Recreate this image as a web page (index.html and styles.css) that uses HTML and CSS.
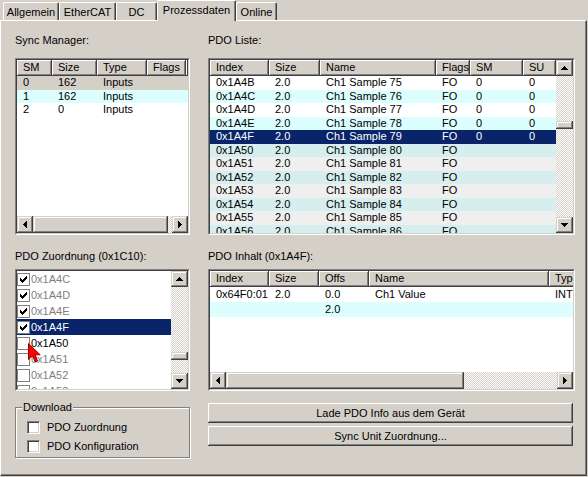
FILE: index.html
```html
<!DOCTYPE html>
<html lang="de">
<head>
<meta charset="utf-8">
<title>Prozessdaten</title>
<link rel="stylesheet" href="styles.css">
</head>
<body>
<div class="tabs">
  <div class="tab tab-allgemein">Allgemein</div>
  <div class="tab tab-ethercat">EtherCAT</div>
  <div class="tab tab-dc">DC</div>
  <div class="tab tab-proz active">Prozessdaten</div>
  <div class="tab tab-online">Online</div>
</div>
<div class="panel">
  <div class="col col-left">
    <div class="label">Sync Manager:</div>
    <div class="sunken box-top">
      <div class="in lv-h">
        <div class="lv lv-sm">
          <div class="hdr"><div>SM</div><div>Size</div><div>Type</div><div>Flags</div><div class="fill"></div></div>
          <div class="r gray"><span>0</span><span>162</span><span>Inputs</span><span></span></div>
          <div class="r cyan"><span>1</span><span>162</span><span>Inputs</span><span></span></div>
          <div class="r"><span>2</span><span>0</span><span>Inputs</span><span></span></div>
        </div>
        <div class="hbar">
          <div class="sbtn hb"><svg width="4" height="7" viewBox="0 0 4 7"><path d="M3 0h1v7H3V6H2V5H1V4H0V3h1V2h1V1h1z"/></svg></div>
          <div class="htrack"><div class="thumb thumb-sm"></div></div>
          <div class="sbtn hb"><svg width="4" height="7" viewBox="0 0 4 7"><path d="M0 0h1v1h1v1h1v1h1v1H3v1H2v1H1v1H0z"/></svg></div>
        </div>
      </div>
    </div>

    <div class="label label2">PDO Zuordnung (0x1C10):</div>
    <div class="sunken box-bottom">
      <div class="in lv-v">
        <div class="lb">
          <div class="item dim"><span class="cb"><svg width="7" height="7" viewBox="0 0 7 7"><path d="M6 0h1v3H6v1H5v1H4v1H3v1H2V6H1V5H0V2h1v1h1v1h1V3h1V2h1V1h1z"/></svg></span>0x1A4C</div>
          <div class="item dim"><span class="cb"><svg width="7" height="7" viewBox="0 0 7 7"><path d="M6 0h1v3H6v1H5v1H4v1H3v1H2V6H1V5H0V2h1v1h1v1h1V3h1V2h1V1h1z"/></svg></span>0x1A4D</div>
          <div class="item dim"><span class="cb"><svg width="7" height="7" viewBox="0 0 7 7"><path d="M6 0h1v3H6v1H5v1H4v1H3v1H2V6H1V5H0V2h1v1h1v1h1V3h1V2h1V1h1z"/></svg></span>0x1A4E</div>
          <div class="item sel"><span class="cb"><svg width="7" height="7" viewBox="0 0 7 7"><path d="M6 0h1v3H6v1H5v1H4v1H3v1H2V6H1V5H0V2h1v1h1v1h1V3h1V2h1V1h1z"/></svg></span>0x1A4F</div>
          <div class="item"><span class="cb"></span>0x1A50</div>
          <div class="item dim"><span class="cb"></span>0x1A51</div>
          <div class="item dim"><span class="cb"></span>0x1A52</div>
          <div class="item dim"><span class="cb"></span>0x1A53</div>
        </div>
        <div class="vbar">
          <div class="sbtn vb"><svg width="7" height="4" viewBox="0 0 7 4"><path d="M3 0h1v1h1v1h1v1h1v1H0V3h1V2h1V1h1z"/></svg></div>
          <div class="vtrack"><div class="thumb thumb-lb"></div></div>
          <div class="sbtn vb"><svg width="7" height="4" viewBox="0 0 7 4"><path d="M0 0h7v1H6v1H5v1H4v1H3V3H2V2H1V1H0z"/></svg></div>
        </div>
      </div>
    </div>

    <fieldset class="group">
      <legend>Download</legend>
      <div class="chk"><span class="cb3d"></span>PDO Zuordnung</div>
      <div class="chk"><span class="cb3d"></span>PDO Konfiguration</div>
    </fieldset>
  </div>

  <div class="col col-right">
    <div class="label">PDO Liste:</div>
    <div class="sunken box-top">
      <div class="in lv-v">
        <div class="lv lv-pdo">
          <div class="hdr"><div>Index</div><div>Size</div><div>Name</div><div>Flags</div><div>SM</div><div>SU</div></div>
          <div class="r"><span>0x1A4B</span><span>2.0</span><span>Ch1 Sample 75</span><span>FO</span><span>0</span><span>0</span></div>
          <div class="r cyan"><span>0x1A4C</span><span>2.0</span><span>Ch1 Sample 76</span><span>FO</span><span>0</span><span>0</span></div>
          <div class="r"><span>0x1A4D</span><span>2.0</span><span>Ch1 Sample 77</span><span>FO</span><span>0</span><span>0</span></div>
          <div class="r cyan"><span>0x1A4E</span><span>2.0</span><span>Ch1 Sample 78</span><span>FO</span><span>0</span><span>0</span></div>
          <div class="r sel"><span>0x1A4F</span><span>2.0</span><span>Ch1 Sample 79</span><span>FO</span><span>0</span><span>0</span></div>
          <div class="r dcyan"><span>0x1A50</span><span>2.0</span><span>Ch1 Sample 80</span><span>FO</span><span></span><span></span></div>
          <div class="r dgray"><span>0x1A51</span><span>2.0</span><span>Ch1 Sample 81</span><span>FO</span><span></span><span></span></div>
          <div class="r dcyan"><span>0x1A52</span><span>2.0</span><span>Ch1 Sample 82</span><span>FO</span><span></span><span></span></div>
          <div class="r dgray"><span>0x1A53</span><span>2.0</span><span>Ch1 Sample 83</span><span>FO</span><span></span><span></span></div>
          <div class="r dcyan"><span>0x1A54</span><span>2.0</span><span>Ch1 Sample 84</span><span>FO</span><span></span><span></span></div>
          <div class="r dgray"><span>0x1A55</span><span>2.0</span><span>Ch1 Sample 85</span><span>FO</span><span></span><span></span></div>
          <div class="r dcyan"><span>0x1A56</span><span>2.0</span><span>Ch1 Sample 86</span><span>FO</span><span></span><span></span></div>
        </div>
        <div class="vbar">
          <div class="sbtn vb"><svg width="7" height="4" viewBox="0 0 7 4"><path d="M3 0h1v1h1v1h1v1h1v1H0V3h1V2h1V1h1z"/></svg></div>
          <div class="vtrack"><div class="thumb thumb-pdo"></div></div>
          <div class="sbtn vb"><svg width="7" height="4" viewBox="0 0 7 4"><path d="M0 0h7v1H6v1H5v1H4v1H3V3H2V2H1V1H0z"/></svg></div>
        </div>
      </div>
    </div>

    <div class="label label2">PDO Inhalt (0x1A4F):</div>
    <div class="sunken box-bottom">
      <div class="in lv-h">
        <div class="lv lv-inh">
          <div class="hdr"><div>Index</div><div>Size</div><div>Offs</div><div>Name</div><div>Type</div></div>
          <div class="r"><span>0x64F0:01</span><span>2.0</span><span>0.0</span><span>Ch1 Value</span><span>INT</span></div>
          <div class="r cyan"><span></span><span></span><span>2.0</span><span></span><span></span></div>
        </div>
        <div class="hbar">
          <div class="sbtn hb"><svg width="4" height="7" viewBox="0 0 4 7"><path d="M3 0h1v7H3V6H2V5H1V4H0V3h1V2h1V1h1z"/></svg></div>
          <div class="htrack"><div class="thumb thumb-inh"></div></div>
          <div class="sbtn hb"><svg width="4" height="7" viewBox="0 0 4 7"><path d="M0 0h1v1h1v1h1v1h1v1H3v1H2v1H1v1H0z"/></svg></div>
        </div>
      </div>
    </div>

    <button class="btn btn-first" type="button">Lade PDO Info aus dem Gerät</button>
    <button class="btn" type="button">Sync Unit Zuordnung...</button>
  </div>

  <svg class="cursor" width="13" height="21" viewBox="0 0 13 21"><path d="M0.5 0.5V16.5L4.5 12.7L7.2 19L9.6 18L7 11.8H12.2Z" fill="#ff0000" stroke="#9a0000" stroke-width="1" stroke-linejoin="miter"/></svg>
</div>
</body>
</html>
```

FILE: styles.css
```css
* { box-sizing: border-box; }
html, body { margin: 0; padding: 0; }
body {
  width: 588px;
  height: 477px;
  overflow: hidden;
  background: #d4d0c8;
  color: #000;
  font-family: "Liberation Sans", Arial, sans-serif;
  font-size: 11px;
  line-height: 13px;
}

/* ---------- tabs ---------- */
.tabs {
  display: flex;
  align-items: flex-end;
  height: 20px;
  padding-left: 3px;
}
.tab {
  flex: none;
  height: 18px;
  padding-top: 3px;
  line-height: 13px;
  text-align: center;
  white-space: nowrap;
  border-top: 1px solid #fff;
  border-left: 1px solid #fff;
  border-right: 1px solid #404040;
  border-radius: 2px 2px 0 0;
  box-shadow: inset -1px 0 #808080;
}
.tab-allgemein { width: 56px; }
.tab-ethercat { width: 57px; }
.tab-dc { width: 41px; }
.tab-proz { width: 79px; }
.tab-online { width: 41px; }
.tab.active {
  height: 21px;
  margin-bottom: -1px;
  position: relative;
  z-index: 1;
  background: #d4d0c8;
  padding-top: 3px;
}

/* ---------- panel ---------- */
.panel {
  position: relative;
  width: 587px;
  height: 456px;
  border: 1px solid #fff;
  border-right-color: #404040;
  border-bottom-color: #404040;
  box-shadow: inset -1px -1px #808080;
  display: flex;
  gap: 18px;
  padding: 13px 0 0 14px;
}
.col { display: flex; flex-direction: column; flex: none; }
.col-left { width: 175px; }
.col-right { width: 367px; }

.label { height: 13px; line-height: 13px; white-space: nowrap; }
.label2 { margin-top: 15px; }

/* ---------- sunken boxes ---------- */
.sunken {
  border: 1px solid;
  border-color: #808080 #fff #fff #808080;
}
.sunken > .in {
  height: 100%;
  border: 1px solid;
  border-color: #404040 #d4d0c8 #d4d0c8 #404040;
  background: #fff;
  overflow: hidden;
  display: grid;
}
.box-top { height: 177px; margin-top: 11px; }
.box-bottom { height: 122px; margin-top: 6px; }
.lv-v { grid-template-columns: minmax(0, 1fr) 17px; }
.lv-h { grid-template-rows: minmax(0, 1fr) 17px; }

/* ---------- list views ---------- */
.lv { overflow: hidden; min-width: 0; min-height: 0; }
.hdr { display: flex; height: 16px; }
.hdr > div {
  flex: none;
  height: 16px;
  line-height: 15px;
  padding-left: 6px;
  white-space: nowrap;
  overflow: hidden;
  background: #d4d0c8;
  box-shadow: inset -1px -1px #404040, inset 1px 1px #fff, inset -2px -2px #808080;
}
.hdr > .fill { flex: 1; min-width: 0; padding: 0; }
.r { display: flex; height: 13.5px; line-height: 13.5px; white-space: nowrap; }
.r > span { flex: none; padding-left: 6px; overflow: hidden; }
.r.gray { background: #d4d0c8; }
.r.cyan { background: #dcfefe; }
.r.dcyan { background: #d6eeee; }
.r.dgray { background: #efefef; }
.r.sel { background: #0a246a; color: #fff; }

.lv-sm .hdr > div:nth-child(1), .lv-sm .r > span:nth-child(1) { width: 35px; }
.lv-sm .hdr > div:nth-child(2), .lv-sm .r > span:nth-child(2) { width: 45px; }
.lv-sm .hdr > div:nth-child(3), .lv-sm .r > span:nth-child(3) { width: 50px; }
.lv-sm .hdr > div:nth-child(4), .lv-sm .r > span:nth-child(4) { width: 39px; }

.lv-pdo .hdr > div:nth-child(1), .lv-pdo .r > span:nth-child(1) { width: 59px; }
.lv-pdo .hdr > div:nth-child(2), .lv-pdo .r > span:nth-child(2) { width: 51px; }
.lv-pdo .hdr > div:nth-child(3), .lv-pdo .r > span:nth-child(3) { width: 116px; }
.lv-pdo .hdr > div:nth-child(4), .lv-pdo .r > span:nth-child(4) { width: 34px; }
.lv-pdo .hdr > div:nth-child(5), .lv-pdo .r > span:nth-child(5) { width: 53px; }
.lv-pdo .hdr > div:nth-child(6), .lv-pdo .r > span:nth-child(6) { width: 33px; }

.lv-inh .hdr, .lv-inh .r { width: 420px; }
.lv-inh .r { height: 15px; line-height: 15px; }
.lv-inh .hdr > div:nth-child(1), .lv-inh .r > span:nth-child(1) { width: 59px; }
.lv-inh .hdr > div:nth-child(2), .lv-inh .r > span:nth-child(2) { width: 50px; }
.lv-inh .hdr > div:nth-child(3), .lv-inh .r > span:nth-child(3) { width: 50px; }
.lv-inh .hdr > div:nth-child(4), .lv-inh .r > span:nth-child(4) { width: 180px; }
.lv-inh .hdr > div:nth-child(5), .lv-inh .r > span:nth-child(5) { width: 60px; }

/* ---------- list box with checkboxes ---------- */
.lb { overflow: hidden; min-height: 0; }
.item {
  display: flex;
  align-items: center;
  height: 16px;
  line-height: 16px;
  white-space: nowrap;
}
.item .cb {
  flex: none;
  width: 13px;
  height: 13px;
  margin-right: 1px;
  border: 1px solid #808080;
  background: #fff;
  display: flex;
  align-items: center;
  justify-content: center;
}
.item.dim { color: #808080; }
.item.sel { background: #0a246a; color: #fff; }

/* ---------- scrollbars ---------- */
.vbar, .hbar { display: flex; background: #d4d0c8; }
.vbar { flex-direction: column; }
.sbtn {
  flex: none;
  display: flex;
  align-items: center;
  justify-content: center;
  background: #d4d0c8;
  box-shadow: inset -1px -1px #404040, inset 1px 1px #d4d0c8, inset -2px -2px #808080, inset 2px 2px #fff;
}
.sbtn svg { display: block; fill: #000; }
.vb { width: 17px; height: 16px; }
.hb { width: 16px; height: 17px; }
.vtrack, .htrack {
  flex: 1;
  display: flex;
  background-color: #fff;
  background-image: conic-gradient(#d4d0c8 25%, #fff 0 50%, #d4d0c8 0 75%, #fff 0);
  background-size: 2px 2px;
}
.vtrack { flex-direction: column; }
.thumb {
  flex: none;
  background: #d4d0c8;
  box-shadow: inset -1px -1px #404040, inset 1px 1px #d4d0c8, inset -2px -2px #808080, inset 2px 2px #fff;
}
.thumb-pdo { height: 8px; margin-top: 45px; }
.thumb-lb { height: 8px; margin-top: 65px; }
.thumb-sm { width: 135px; }
.thumb-inh { width: 238px; }

/* ---------- group box ---------- */
.group {
  margin: 10px 0 0;
  padding: 4px 0 1px 11px;
  border: 1px solid #808080;
  box-shadow: 1px 1px 0 #fff, inset 1px 1px 0 #fff;
  min-width: 0;
}
.group legend {
  margin-left: -5px;
  padding: 0 1px;
  line-height: 13px;
  background: #d4d0c8;
}
.chk {
  display: flex;
  align-items: center;
  height: 19px;
  white-space: nowrap;
}
.cb3d {
  flex: none;
  width: 13px;
  height: 13px;
  margin-right: 7px;
  background: #fff;
  border: 1px solid;
  border-color: #808080 #fff #fff #808080;
  box-shadow: inset 1px 1px #404040, inset -1px -1px #d4d0c8;
}

/* ---------- buttons ---------- */
.btn {
  display: block;
  width: 365px;
  height: 20px;
  margin: 3px 0 0;
  padding: 0;
  border: none;
  background: #d4d0c8;
  color: #000;
  font: inherit;
  line-height: 18px;
  text-align: center;
  box-shadow: inset -1px -1px #404040, inset 1px 1px #fff, inset -2px -2px #808080, inset 2px 2px #d4d0c8;
}
.btn-first { margin-top: 12px; }

/* ---------- mouse pointer over the list ---------- */
.cursor {
  position: absolute;
  left: 27px;
  top: 322px;
}
```
